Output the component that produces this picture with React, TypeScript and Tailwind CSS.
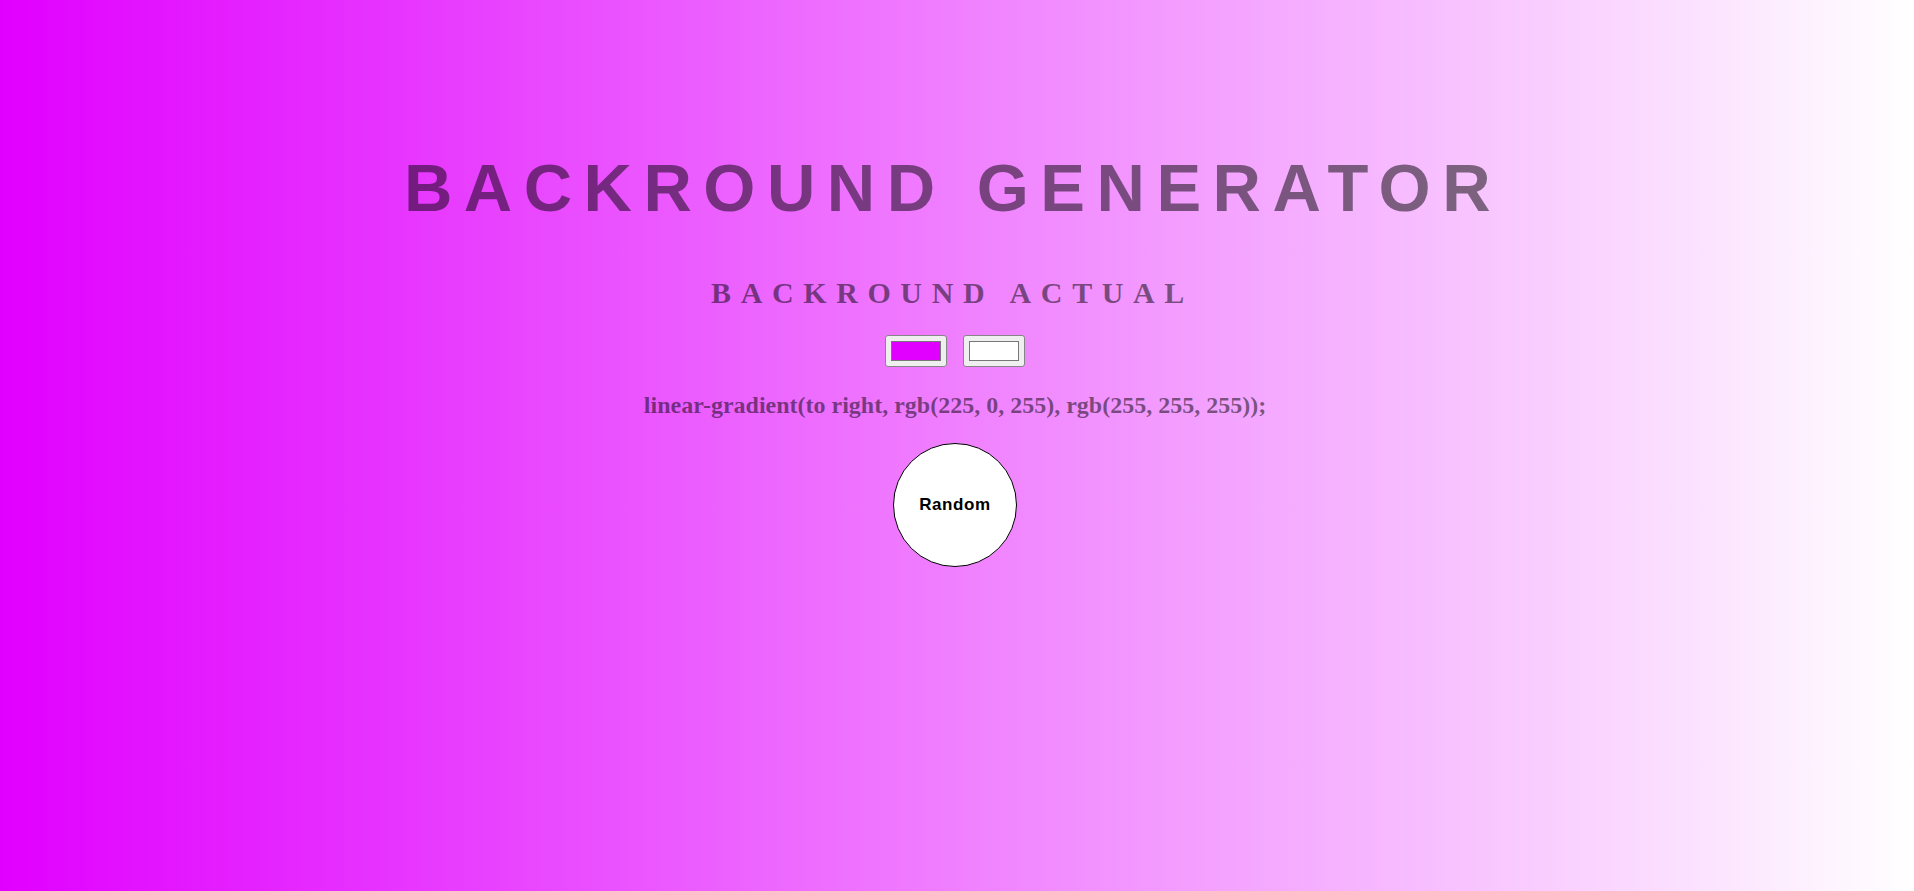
import React, { useState } from 'react'

const toRgb = (hex: string) => {
  const n = parseInt(hex.slice(1), 16)
  return `rgb(${(n >> 16) & 255}, ${(n >> 8) & 255}, ${n & 255})`
}

function ColorBox({ color }: { color: string }) {
  return (
    <div className="flex h-[32px] w-[62px] items-center justify-center rounded-[3px] border border-[#858585] bg-[#efefef]">
      <div
        className="h-[20px] w-[50px] border border-[#777777]"
        style={{ backgroundColor: color }}
      />
    </div>
  )
}

export default function App() {
  const [colors, setColors] = useState(['#e100ff', '#ffffff'])
  const css = `linear-gradient(to right, ${toRgb(colors[0])}, ${toRgb(colors[1])});`

  const randomize = () => {
    const rand = () =>
      '#' +
      Math.floor(Math.random() * 0xffffff)
        .toString(16)
        .padStart(6, '0')
    setColors([rand(), rand()])
  }

  return (
    <div
      className="flex min-h-screen w-full flex-col items-center pr-[4px] pt-[154px] text-black/50"
      style={{ backgroundImage: `linear-gradient(to right, ${colors[0]}, ${colors[1]})` }}>
      <h1 className="m-0 pr-[4px] font-['Liberation_Sans',Arial,sans-serif] text-[67px] font-bold leading-[67px] tracking-[11.5px]">
        BACKROUND GENERATOR
      </h1>
      <h3 className="mt-[57px] pr-[5px] font-['Liberation_Serif','Times_New_Roman',serif] text-[30px] font-bold leading-[30px] tracking-[9.6px]">
        BACKROUND ACTUAL
      </h3>
      <div className="mt-[27px] flex gap-[16px]">
        <ColorBox color={colors[0]} />
        <ColorBox color={colors[1]} />
      </div>
      <h3 className="mt-[26px] font-['Liberation_Serif','Times_New_Roman',serif] text-[24px] font-bold leading-[24px]">
        {css}
      </h3>
      <button
        onClick={randomize}
        className="mt-[26px] flex h-[124px] w-[124px] items-center justify-center rounded-full border border-black bg-white font-['Liberation_Sans',Arial,sans-serif] text-[17px] font-bold tracking-[0.6px] text-black">
        Random
      </button>
    </div>
  )
}
